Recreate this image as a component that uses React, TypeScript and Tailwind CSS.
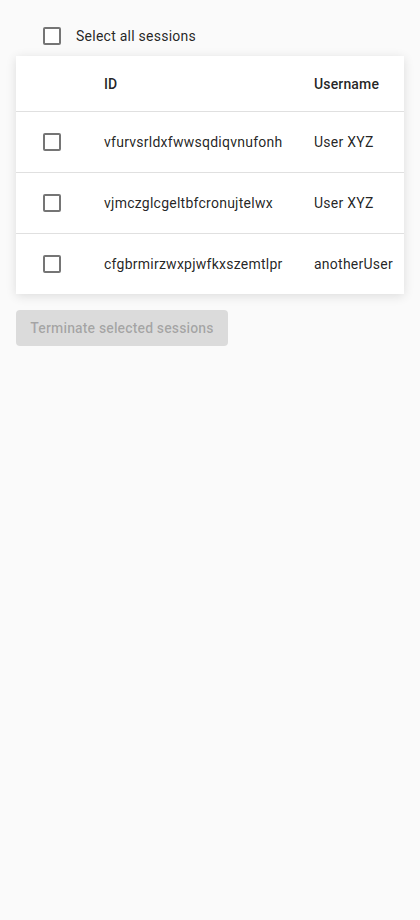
const sessions = [
  { id: "vfurvsrldxfwwsqdiqvnufonh", username: "User XYZ" },
  { id: "vjmczglcgeltbfcronujtelwx", username: "User XYZ" },
  { id: "cfgbrmirzwxpjwfkxszemtlpr", username: "anotherUser" },
];

const Box = () => (
  <span className="block w-[18px] h-[18px] rounded-[2px] border-2 border-[#757575] bg-white" />
);

export default function App() {
  return (
    <div
      className="min-h-[920px] bg-[#fafafa] px-4 pt-[27px] text-[14px] text-[rgba(0,0,0,0.87)] tracking-[0.25px]"
      style={{ fontFamily: "Roboto, 'Liberation Sans', sans-serif" }}
    >
      <label className="flex items-center h-[18px] mb-[11px]">
        <span className="ml-[27px]">
          <Box />
        </span>
        <span className="ml-[15px] leading-none">Select all sessions</span>
      </label>

      <div className="bg-white overflow-hidden shadow-[0_2px_10px_rgba(0,0,0,0.12)]">
        <div className="flex h-[56px] items-center border-b border-[#e0e0e0] font-medium tracking-[0.15px] pt-[2px]">
          <div className="w-[88px] shrink-0" />
          <div className="w-[210px] shrink-0">ID</div>
          <div className="whitespace-nowrap">Username</div>
        </div>
        {sessions.map((s, i) => (
          <div
            key={s.id}
            className={
              "flex items-center " +
              (i < sessions.length - 1 ? "h-[61px] border-b border-[#e0e0e0]" : "h-[60px]")
            }
          >
            <div className="w-[88px] shrink-0 pl-[27px]">
              <Box />
            </div>
            <div className="w-[210px] shrink-0 whitespace-nowrap">{s.id}</div>
            <div className="whitespace-nowrap">{s.username}</div>
          </div>
        ))}
      </div>

      <button
        disabled
        className="mt-4 h-9 w-[212px] whitespace-nowrap rounded-[4px] bg-[rgba(0,0,0,0.12)] text-[rgba(0,0,0,0.26)] font-medium text-[14px] tracking-[0.15px]"
      >
        Terminate selected sessions
      </button>
    </div>
  );
}
